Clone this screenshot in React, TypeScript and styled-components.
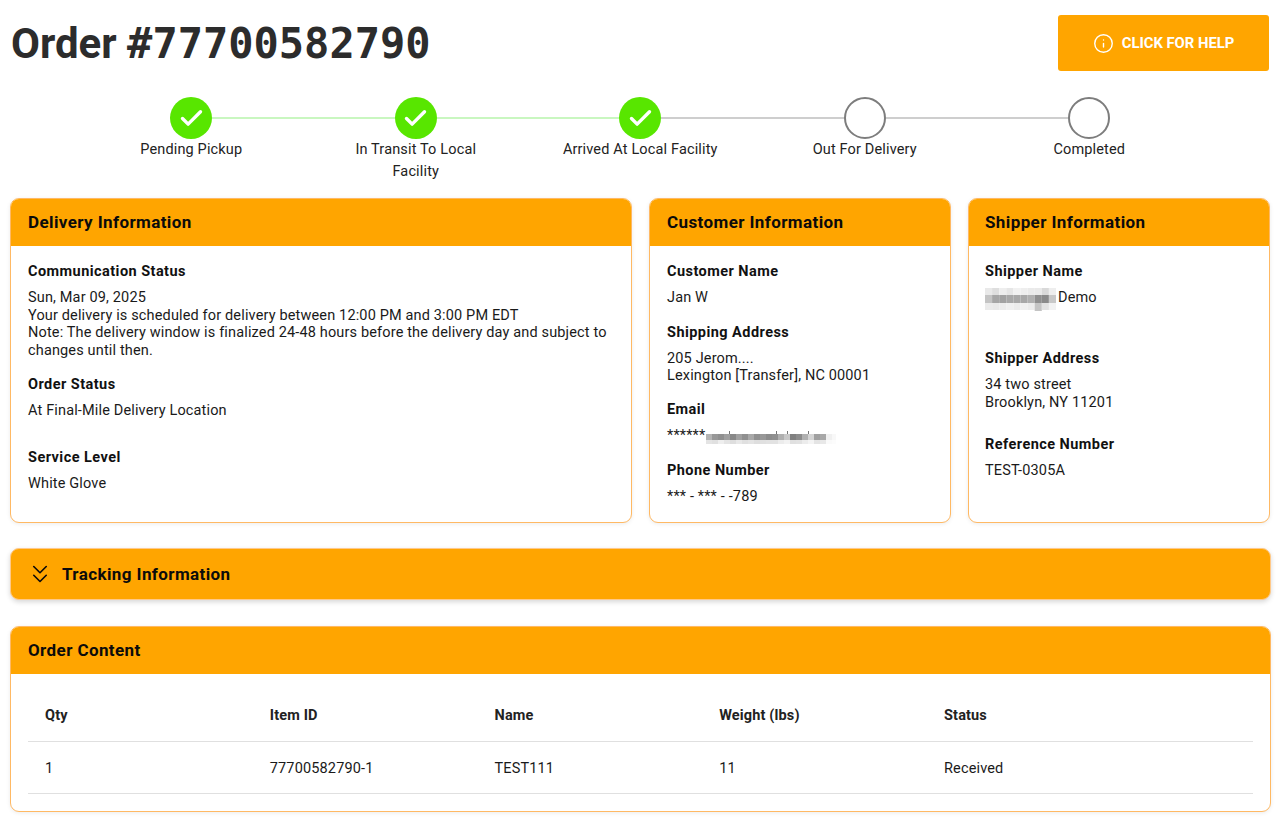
import React from "react";
import styled, { createGlobalStyle } from "styled-components";
import { ChevronsDown, Info, Check } from "lucide-react";

const Global = createGlobalStyle`
  html, body { margin: 0; padding: 0; background: #fff; }
  body { font-family: Roboto, "Liberation Sans", sans-serif; color: #111; overflow: hidden; }
`;

const Page = styled.div`
  width: 1280px;
  height: 820px;
  box-sizing: border-box;
  padding: 15px 10px 0;
  display: flex;
  flex-direction: column;
`;

const TopBar = styled.header`
  display: flex;
  justify-content: space-between;
  align-items: flex-start;
  height: 82px;
`;

const Title = styled.h1`
  margin: 1px 0 0 1px;
  font-size: 42px;
  line-height: 56px;
  font-weight: 700;
  color: #2c2c2c;
`;

const Mono = styled.span`
  font-family: "DejaVu Sans Mono", monospace;
`;

const HelpButton = styled.button`
  width: 211px;
  height: 56px;
  margin-right: 1px;
  border: 0;
  border-radius: 3px;
  background: #ffa500;
  color: #fff;
  font-family: inherit;
  font-size: 14.8px;
  font-weight: 700;
  display: flex;
  align-items: center;
  justify-content: center;
  gap: 8px;
  text-transform: uppercase;
`;

const Stepper = styled.ol`
  list-style: none;
  margin: 0;
  padding: 0 69px;
  display: grid;
  grid-template-columns: repeat(5, 224.5px);
  height: 101px;
`;

const Step = styled.li`
  position: relative;
  display: flex;
  flex-direction: column;
  align-items: center;
`;

const Connector = styled.span<{ $done: boolean }>`
  position: absolute;
  top: 20px;
  left: calc(50% + 21px);
  width: calc(100% - 42px);
  height: 2px;
  background: ${(p) => (p.$done ? "#c9f7c0" : "#cecece")};
`;

const Dot = styled.span<{ $done: boolean }>`
  width: 42px;
  height: 42px;
  box-sizing: border-box;
  border-radius: 50%;
  display: flex;
  align-items: center;
  justify-content: center;
  color: #fff;
  background: ${(p) => (p.$done ? "#58e600" : "#fff")};
  border: ${(p) => (p.$done ? "none" : "2px solid #7d7d7d")};
`;

const StepLabel = styled.span`
  width: 160px;
  text-align: center;
  font-size: 14.5px;
  letter-spacing: 0.15px;
  line-height: 22px;
  color: #222;
`;

const Cards = styled.section`
  display: grid;
  grid-template-columns: 622px 302px 302px;
  gap: 17px;
  height: 325px;
`;

const Card = styled.article<{ $inset?: number }>`
  --inset: ${(p) => p.$inset ?? 17}px;
  border: 1px solid #ffb964;
  border-radius: 9px;
  overflow: hidden;
  box-shadow: 0 1px 4px rgba(0, 0, 0, 0.08);
  background: #fff;
`;

const CardHeader = styled.h2`
  margin: -1px -1px 0;
  height: 48px;
  padding: 0 calc(var(--inset) + 1px);
  display: flex;
  align-items: center;
  background: #ffa500;
  color: #0b0b0b;
  font-size: 17px;
  font-weight: 700;
  letter-spacing: 0.4px;
`;

const CardBody = styled.div`
  padding: 16px var(--inset) 0;
`;

const Field = styled.div<{ $after: number }>`
  margin-bottom: ${(p) => p.$after}px;
`;

const Label = styled.div`
  padding-top: 1px;
  font-size: 14.5px;
  line-height: 18px;
  font-weight: 700;
  letter-spacing: 0.45px;
  margin-bottom: 8px;
  color: #111;
`;

const Value = styled.div`
  font-size: 14.5px;
  letter-spacing: 0.15px;
  line-height: 17.6px;
  color: #1a1a1a;
  display: flex;
  flex-direction: column;
`;

const Inline = styled.span`
  display: inline-flex;
  align-items: flex-start;
  gap: 2px;
  white-space: nowrap;
`;

const Blur = styled.svg<{ $lift: number; $pull?: number }>`
  display: block;
  flex: none;
  margin-top: ${(p) => -p.$lift}px;
  margin-left: ${(p) => -(p.$pull ?? 0)}px;
`;

const Tracking = styled.div`
  margin: 25px -1px 0 0;
  height: 52px;
  box-sizing: border-box;
  padding-left: 14px;
  display: flex;
  align-items: center;
  gap: 7px;
  border-radius: 9px;
  border: 1px solid #ffc98a;
  background: #ffa500;
  box-shadow: 0 2px 5px rgba(0, 0, 0, 0.16);
  color: #0b0b0b;
  font-size: 17px;
  font-weight: 700;
  letter-spacing: 0.4px;
`;

const ContentCard = styled(Card)`
  margin: 26px -1px 0 0;
  height: 184px;
`;

const TableWrap = styled.div`
  padding: 15px 17px 0;
`;

const Table = styled.table`
  width: 100%;
  border-collapse: collapse;
  table-layout: fixed;
  font-size: 14.5px;
  letter-spacing: 0.15px;
`;

const Col = styled.col`
  width: 224.75px;
`;

const Th = styled.th`
  height: 51px;
  padding: 1px 17px 0;
  text-align: left;
  font-weight: 700;
  color: #222;
  border-bottom: 1px solid #e0e0e0;
`;

const Td = styled.td`
  height: 50px;
  padding: 1px 17px 0;
  color: #1a1a1a;
  border-bottom: 1px solid #e0e0e0;
`;

const rowTop = ["#e9e9e9", "#dedede", "#eeeeee", "#e6e6e6", "#f1f1f1", "#eeeeee", "#eaeaea", "#e9e9e9", "#d9d9d9", "#eeeeee"];
const rowMid = ["#c4c4c4", "#a6a6a6", "#a2a2a2", "#a8a8a8", "#a8a8a8", "#a8a8a8", "#b0b0b0", "#8f8f8f", "#8a8a8a", "#c8c8c8"];
const rowLow = ["#ebebeb", "#e9e9e9", "#ececec", "#f0f0f0", "#ececec", "#f0f0f0", "#ececec", "#c4c4c4", "#e2e2e2", "#f2f2f2"];

const emailDark = ["#b4b4b4","#989898","#909090","#a0a0a0","#888888","#a0a0a0","#909090","#a8a8a8","#909090","#989898","#8c8c8c","#909090","#b0b0b0","#c8c8c8","#808080","#8c8c8c","#b0b0b0","#d4d4d4","#a0a0a0","#a8a8a8","#f0f0f0","#f8f8f8"];
const emailLight = ["#e4e4e4","#e0e0e0","#eeeeee","#e4e4e4","#dedede","#e8e8e8","#e0e0e0","#e4e4e4","#dedede","#e0e0e0","#e2e2e2","#e2e2e2","#ececec","#f2f2f2","#e0e0e0","#e2e2e2","#ececec","#f4f4f4","#e4e4e4","#e8e8e8","#fafafa","#fcfcfc"];
const emailSpecks = [23, 70, 81, 102];

const steps = [
  { label: "Pending Pickup", done: true },
  { label: "In Transit To Local Facility", done: true },
  { label: "Arrived At Local Facility", done: true },
  { label: "Out For Delivery", done: false },
  { label: "Completed", done: false },
];

export default function App() {
  return (
    <Page>
      <Global />
      <TopBar>
        <Title>Order <Mono>#77700582790</Mono></Title>
        <HelpButton><Info size={21} strokeWidth={1.6} />Click for help</HelpButton>
      </TopBar>
      <Stepper>
        {steps.map((s, i) => (
          <Step key={s.label}>
            {i < steps.length - 1 && <Connector $done={s.done && steps[i + 1].done} />}
            <Dot $done={s.done}>{s.done && <Check size={27} strokeWidth={3} />}</Dot>
            <StepLabel>{s.label}</StepLabel>
          </Step>
        ))}
      </Stepper>
      <Cards>
        <Card>
          <CardHeader>Delivery Information</CardHeader>
          <CardBody>
            <Field $after={16}>
              <Label>Communication Status</Label>
              <Value>
                <span>Sun, Mar 09, 2025</span>
                <span>Your delivery is scheduled for delivery between 12:00 PM and 3:00 PM EDT</span>
                <span>Note: The delivery window is finalized 24-48 hours before the delivery day and subject to changes until then.</span>
              </Value>
            </Field>
            <Field $after={28}>
              <Label>Order Status</Label>
              <Value>At Final-Mile Delivery Location</Value>
            </Field>
            <Field $after={0}>
              <Label>Service Level</Label>
              <Value>White Glove</Value>
            </Field>
          </CardBody>
        </Card>
        <Card>
          <CardHeader>Customer Information</CardHeader>
          <CardBody>
            <Field $after={16}>
              <Label>Customer Name</Label>
              <Value>Jan W</Value>
            </Field>
            <Field $after={15}>
              <Label>Shipping Address</Label>
              <Value><span>205 Jerom....</span><span>Lexington [Transfer], NC 00001</span></Value>
            </Field>
            <Field $after={17}>
              <Label>Email</Label>
              <Value>
                <Inline>
                  ******
                  <Blur $lift={1} $pull={1} width="130" height="18" viewBox="0 0 130 18" aria-hidden="true">
                    {emailSpecks.map((x) => (
                      <rect key={x} x={x} y={5} width={1} height={3} fill="#777" />
                    ))}
                    {emailDark.map((c, i) => (
                      <rect key={i} x={i * 6} y={8} width={6} height={6} fill={c} />
                    ))}
                    {emailLight.map((c, i) => (
                      <rect key={i} x={i * 6} y={14} width={6} height={4} fill={c} />
                    ))}
                  </Blur>
                </Inline>
              </Value>
            </Field>
            <Field $after={0}>
              <Label>Phone Number</Label>
              <Value>*** - *** - -789</Value>
            </Field>
          </CardBody>
        </Card>
        <Card $inset={16}>
          <CardHeader>Shipper Information</CardHeader>
          <CardBody>
            <Field $after={38}>
              <Label>Shipper Name</Label>
              <Value>
                <Inline>
                  <Blur $lift={1} width="71" height="23" viewBox="0 0 71 23" aria-hidden="true">
                    {rowTop.map((c, i) => (
                      <rect key={i} x={i * 7.1} y={0} width={7.1} height={7} fill={c} />
                    ))}
                    {rowMid.map((c, i) => (
                      <rect key={i} x={i * 7.1} y={7} width={7.1} height={8} fill={c} />
                    ))}
                    {rowLow.map((c, i) => (
                      <rect key={i} x={i * 7.1} y={15} width={7.1} height={i === 7 ? 8 : 7} fill={c} />
                    ))}
                  </Blur>
                  Demo
                </Inline>
              </Value>
            </Field>
            <Field $after={24}>
              <Label>Shipper Address</Label>
              <Value><span>34 two street</span><span>Brooklyn, NY 11201</span></Value>
            </Field>
            <Field $after={0}>
              <Label>Reference Number</Label>
              <Value>TEST-0305A</Value>
            </Field>
          </CardBody>
        </Card>
      </Cards>
      <Tracking><ChevronsDown size={30} strokeWidth={1.3} />Tracking Information</Tracking>
      <ContentCard>
        <CardHeader>Order Content</CardHeader>
        <TableWrap>
          <Table>
            <colgroup><Col /><Col /><Col /><Col /><col /></colgroup>
            <thead>
              <tr><Th>Qty</Th><Th>Item ID</Th><Th>Name</Th><Th>Weight (lbs)</Th><Th>Status</Th></tr>
            </thead>
            <tbody>
              <tr><Td>1</Td><Td>77700582790-1</Td><Td>TEST111</Td><Td>11</Td><Td>Received</Td></tr>
            </tbody>
          </Table>
        </TableWrap>
      </ContentCard>
    </Page>
  );
}
